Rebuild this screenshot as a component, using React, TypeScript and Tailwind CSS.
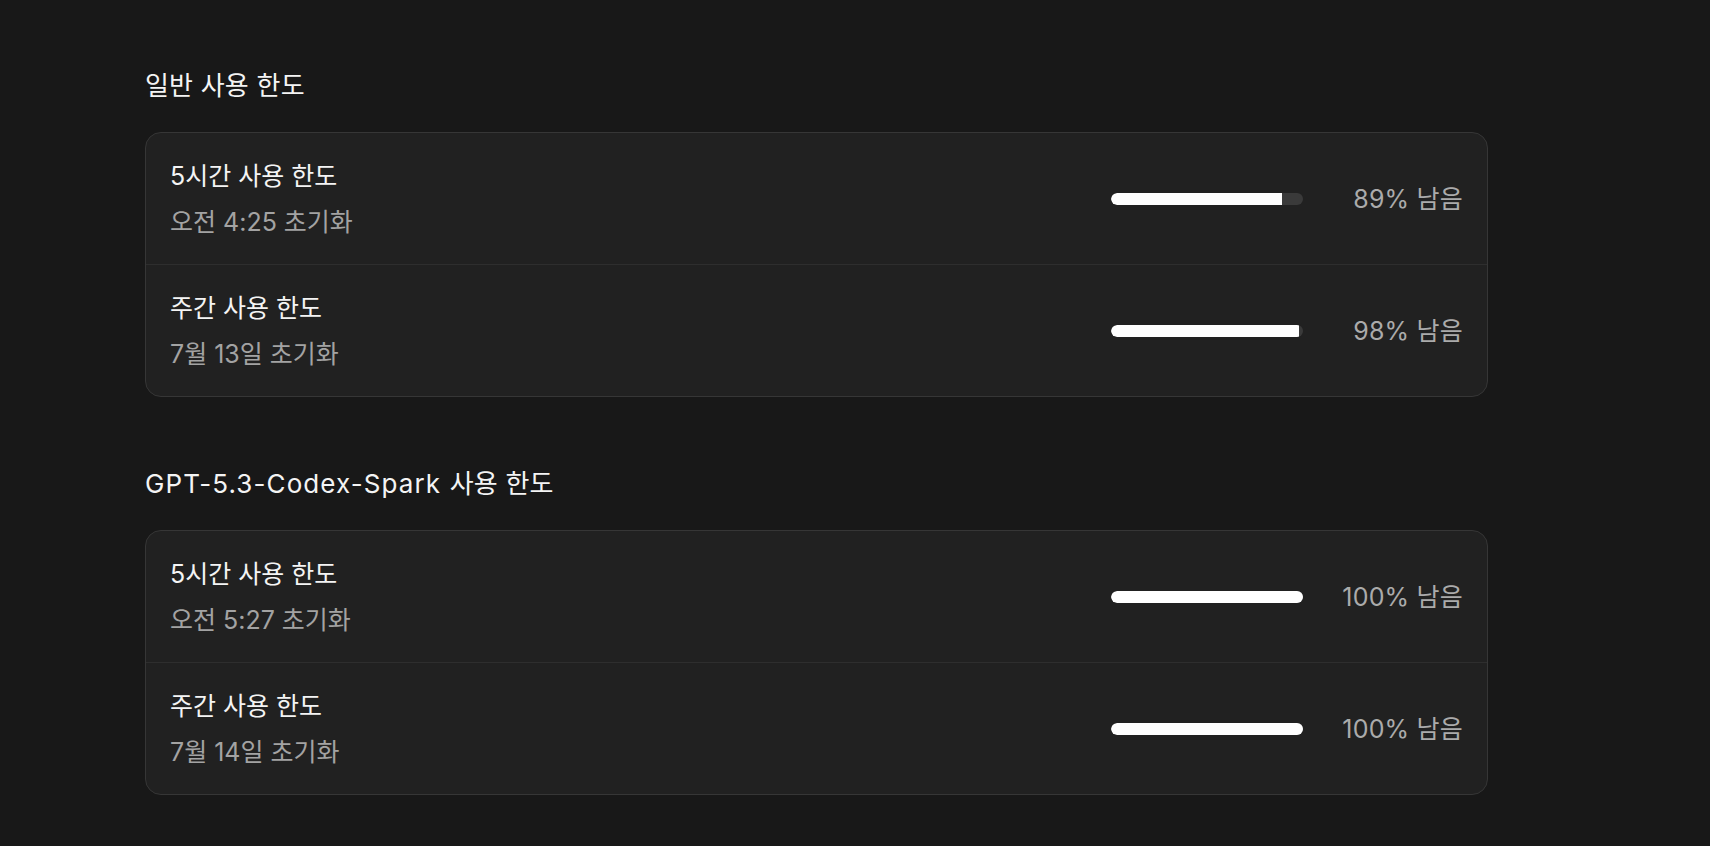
import React from "react";

type Limit = {
  title: string;
  reset: string;
  remaining: number;
};

type Section = {
  model?: string;
  label: string;
  limits: Limit[];
};

const sections: Section[] = [
  {
    label: "일반 사용 한도",
    limits: [
      { title: "5시간 사용 한도", reset: "오전 4:25 초기화", remaining: 89 },
      { title: "주간 사용 한도", reset: "7월 13일 초기화", remaining: 98 },
    ],
  },
  {
    model: "GPT-5.3-Codex-Spark",
    label: "사용 한도",
    limits: [
      { title: "5시간 사용 한도", reset: "오전 5:27 초기화", remaining: 100 },
      { title: "주간 사용 한도", reset: "7월 14일 초기화", remaining: 100 },
    ],
  },
];

function UsageBar({ value }: { value: number }) {
  return (
    <div className="h-[12px] w-[192px] overflow-hidden rounded-full bg-[#3a3a3a]">
      <div className="h-full rounded-l-full bg-white" style={{ width: `${value}%` }} />
    </div>
  );
}

function LimitRow({ limit }: { limit: Limit }) {
  return (
    <div className="flex items-center px-6 pt-[27px] pb-[25px]">
      <div className="flex flex-1 flex-col gap-[13px]">
        <div className="text-[25px] leading-[33px] text-[#f4f4f4]">{limit.title}</div>
        <div className="text-[25px] leading-[33px] text-[#a3a3a3]">{limit.reset}</div>
      </div>
      <div className="-mt-[2px] flex items-center gap-[32px]">
        <UsageBar value={limit.remaining} />
        <div className="w-[128px] pt-[2px] text-right text-[25px] leading-[33px] tracking-[0.2px] text-[#ababab]">
          {limit.remaining}% 남음
        </div>
      </div>
    </div>
  );
}

export default function App() {
  return (
    <div
      className="min-h-[846px] w-full bg-[#181818] pt-[70px] pl-[145px]"
      style={{ fontFamily: 'Inter, "Noto Sans CJK KR", sans-serif' }}
    >
      <div className="flex w-[1343px] flex-col gap-[71px]">
        {sections.map((section) => (
          <section key={section.label + (section.model ?? "")} className="flex flex-col gap-[30px]">
            <h2 className="text-[26px] leading-[32px] tracking-[0.2px] text-[#f4f4f4]">
              {section.model && <span className="tracking-[1.1px]">{section.model} </span>}
              {section.label}
            </h2>
            <div className="divide-y divide-[#2e2e2e] rounded-2xl border border-[#363636] bg-[#212121]">
              {section.limits.map((limit) => (
                <LimitRow key={limit.title} limit={limit} />
              ))}
            </div>
          </section>
        ))}
      </div>
    </div>
  );
}
